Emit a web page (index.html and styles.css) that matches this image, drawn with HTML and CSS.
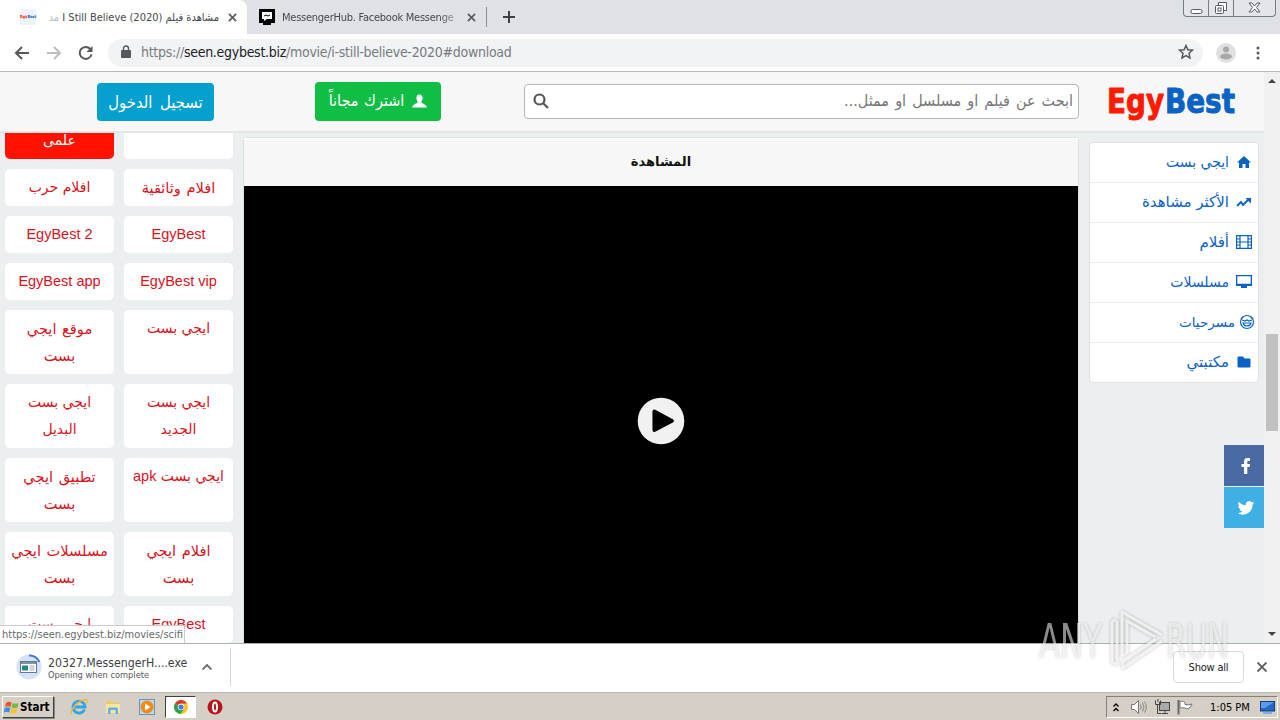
FILE: index.html
```html
<!DOCTYPE html>
<html lang="ar">

<head>
  <meta charset="UTF-8">
  <title>مشاهدة فيلم I Still Believe (2020)</title>
  <link rel="stylesheet" href="styles.css">
</head>

<body>
  <div class="tabstrip">
    <div class="tab active">
      <span class="favicon"><b>Egy</b>Best</span>
      <span class="tab-title rtl" dir="rtl">مشاهدة فيلم <bdi dir="ltr">I Still Believe (2020)</bdi> <i>مد</i></span>
      <svg class="x" viewBox="0 0 10 10"><path d="M1 1l8 8M9 1l-8 8" /></svg>
    </div>
    <div class="tab">
      <svg class="hub" viewBox="0 0 16 16"><path d="M0 0h16v14h-4v2H4v-2H0z" fill="#000" /><path d="M3 3h10v7H8l-3 2v-2H3z" fill="#fff" /><path d="M5 7l2-1 2 1 2-1" fill="none" stroke="#000" /></svg>
      <span class="tab-title fade">MessengerHub. Facebook Messenge</span>
      <svg class="x" viewBox="0 0 10 10"><path d="M1 1l8 8M9 1l-8 8" /></svg>
    </div>
    <span class="tab-sep"></span>
    <svg class="plus" viewBox="0 0 12 12"><path d="M6 0v12M0 6h12" /></svg>
    <div class="win-buttons">
      <span><svg width="13" height="14" viewBox="0 0 13 14"><rect x="1" y="8.500" width="11" height="4" rx="1.500" /></svg></span>
      <span><svg width="14" height="14" viewBox="0 0 14 14"><path d="M4.500 4V1.500h8v8H10" /><rect x="1.500" y="4.500" width="8" height="8" rx="1" /><rect x="4" y="7" width="3" height="3" /></svg></span>
      <span class="wide"><svg width="13" height="13" viewBox="0 0 13 13"><path d="M1 2h3l2.500 3L9 2h3L8.500 6.500 12 11H9L6.500 8 4 11H1l3.500-4.500z" /></svg></span>
    </div>
  </div>

  <div class="toolbar">
    <svg class="nav-icon" viewBox="0 0 16 16"><path d="M15 8H2M8 2L2 8l6 6" /></svg>
    <svg class="nav-icon off" viewBox="0 0 16 16"><path d="M1 8h13M8 2l6 6-6 6" /></svg>
    <svg class="nav-icon" viewBox="0 0 16 16"><path d="M13.500 9.500A6 6 0 1 1 12.300 4" /><path d="M14.500 1v6h-6z" fill="#55585c" stroke="none" /></svg>
    <div class="omnibox">
      <svg width="10" height="13" viewBox="0 0 10 13"><rect y="5" width="10" height="8" rx="1" fill="#55585c" /><path d="M2.500 5V3.500a2.500 2.500 0 0 1 5 0V5" fill="none" stroke="#55585c" stroke-width="1.400" /></svg>
      <span class="url">https://<b>seen.egybest.biz</b>/movie/i-still-believe-2020#download</span>
      <svg class="star" width="16" height="16" viewBox="0 0 16 16"><path d="M8 1.500l1.900 4.300 4.600.4-3.500 3.100 1 4.600L8 11.500l-4 2.400 1-4.600L1.500 6.200l4.600-.4z" /></svg>
    </div>
    <svg class="avatar" width="20" height="20" viewBox="0 0 20 20"><circle cx="10" cy="10" r="10" fill="#e0e0e0" /><circle cx="10" cy="6.500" r="3" fill="#a8a8a8" /><ellipse cx="10" cy="13.500" rx="6" ry="3" fill="#a8a8a8" /></svg>
    <svg class="dots" width="4" height="14" viewBox="0 0 4 14"><circle cx="2" cy="2" r="1.500" /><circle cx="2" cy="7" r="1.500" /><circle cx="2" cy="12" r="1.500" /></svg>
  </div>

  <div class="viewport">
    <div class="site">
      <header>
        <a class="btn login" dir="rtl">تسجيل الدخول</a>
        <a class="btn signup" dir="rtl">
          <svg width="15" height="14" viewBox="0 0 16 14"><path d="M8 0c2.400 0 3.500 1.700 3.300 4-.2 2-1 3-1.300 4 0 2 5.500 2 6 6H0c.5-4 6-4 6-6-.3-1-1.100-2-1.300-4C4.500 1.700 5.600 0 8 0z" fill="#fff" /></svg>
          <span>اشترك مجاناً</span>
        </a>
        <div class="search">
          <svg width="16" height="16" viewBox="0 0 16 16"><circle cx="6.500" cy="6.500" r="5" /><path d="M10 10l5 5" /></svg>
          <span dir="rtl">ابحث عن فيلم او مسلسل او ممثل...</span>
        </div>
        <svg class="logo" width="134" height="44" viewBox="0 0 134 44"><text x="0" y="31" textLength="57" lengthAdjust="spacingAndGlyphs" fill="#ff1a00" stroke="#ff1a00">Egy</text><text x="58" y="31" textLength="70" lengthAdjust="spacingAndGlyphs" fill="#0a62c4" stroke="#0a62c4">Best</text></svg>
      </header>

      <div class="columns">
        <div class="tags">
          <a class="hot" dir="rtl">خيال<br>علمى</a><a></a>
          <a dir="rtl">افلام حرب</a><a class="loose" dir="rtl">افلام وثائقية</a>
          <a class="en">EgyBest 2</a><a class="en">EgyBest</a>
          <a class="en">EgyBest app</a><a class="en">EgyBest vip</a>
          <a class="loose" dir="rtl">موقع ايجي<br>بست</a><a dir="rtl">ايجي بست</a>
          <a dir="rtl">ايجي بست<br>البديل</a><a dir="rtl">ايجي بست<br>الجديد</a>
          <a class="loose" dir="rtl">تطبيق ايجي<br>بست</a><a dir="rtl">ايجي بست <span class="en">apk</span></a>
          <a class="loose" dir="rtl">مسلسلات ايجي<br>بست</a><a class="loose" dir="rtl">افلام ايجي<br>بست</a>
          <a dir="rtl">ايجي بست</a><a class="en">EgyBest</a>
        </div>

        <main>
          <h2 dir="rtl">المشاهدة</h2>
          <div class="player">
            <svg width="48" height="48" viewBox="0 0 48 48"><circle cx="24" cy="24" r="23.300" fill="#f1f1f1" /><path d="M17 14v20l19-10z" stroke="#000" stroke-width="4" stroke-linejoin="round" transform="translate(1.500 1.500) scale(.93)" /></svg>
          </div>
        </main>

        <nav dir="rtl">
          <a><svg viewBox="0 0 16 16"><path d="M8 2l7 6.500h-2V14H9.500v-4h-3v4H3V8.500H1z" /></svg><span>ايجي بست</span></a>
          <a class="loose"><svg viewBox="0 0 16 16"><path class="line" d="M1 12l4-4 2 3 6-6" /><path d="M9.500 4H15v5.500z" /></svg><span>الأكثر مشاهدة</span></a>
          <a class="loose"><svg viewBox="0 0 16 16"><path class="thin" d="M.6 1.600h14.800v12.800H.6zM4 1.600v12.800M12 1.600v12.800M4 8h8M.6 5H4M.6 8H4M.6 11H4M12 5h3.400M12 8h3.400M12 11h3.400" /></svg><span>أفلام</span></a>
          <a><svg viewBox="0 0 16 16"><path d="M0 1h16v11h-5v2H5v-2H0zm1.300 1.300v7.400h13.400V2.300z" fill-rule="evenodd" /></svg><span>مسلسلات</span></a>
          <a class="face"><svg viewBox="0 0 16 16"><circle class="thin" cx="8" cy="8" r="6.500" /><path class="thin" d="M3 6l3 1 2-1 2 1 3-1M4 9c1 4 7 4 8 0zM2 5l2-2M12 3l2 2" /></svg><span>مسرحيات</span></a>
          <a class="loose"><svg viewBox="0 0 16 16"><path d="M2.500 2.500H7l1.500 2h5q1 0 1 1v7q0 1-1 1h-11q-1 0-1-1v-9q0-1 1-1z" /></svg><span>مكتبتي</span></a>
        </nav>
      </div>

      <div class="social">
        <a class="fb"><svg width="20" height="20" viewBox="0 0 20 20"><path d="M8 18v-7H5.500V8H8V5.500C8 3 9.500 2 11.500 2H14v3h-1.500c-1 0-1.200.5-1.200 1.200V8H14l-.4 3h-2.300v7z" /></svg></a>
        <a class="tw"><svg width="18" height="18" viewBox="0 0 24 24"><path d="M23 5a9 9 0 0 1-2.600.7 4.500 4.500 0 0 0 2-2.500 9 9 0 0 1-2.900 1.100 4.500 4.500 0 0 0-7.700 4.100A12.800 12.800 0 0 1 2.500 3.700a4.500 4.500 0 0 0 1.400 6 4.500 4.500 0 0 1-2-.6 4.500 4.500 0 0 0 3.600 4.500 4.500 4.500 0 0 1-2 .1 4.500 4.500 0 0 0 4.200 3.100A9 9 0 0 1 1 18.700 12.800 12.800 0 0 0 20.700 7.300 9 9 0 0 0 23 5z" /></svg></a>
      </div>
      <div class="status">https://seen.egybest.biz/movies/scifi</div>
    </div>

    <div class="scrollbar">
      <svg width="8" height="4" viewBox="0 0 8 4"><path d="M0 4l4-4 4 4z" /></svg>
      <span class="thumb"></span>
      <svg width="8" height="4" viewBox="0 0 8 4"><path d="M0 0h8L4 4z" /></svg>
    </div>
  </div>

  <div class="downloads">
    <svg class="file" width="26" height="26" viewBox="0 0 26 26"><circle cx="13" cy="13" r="12.500" fill="#d3e2f8" /><path d="M13 1.500A11.500 11.500 0 0 1 23.500 8" fill="none" stroke="#3d7bd9" stroke-width="2" /><rect x="4.500" y="7.500" width="16" height="11" fill="#fff" stroke="#63798b" /><path d="M5 8h15v2H5z" fill="#7d95a8" /><path d="M6 11.500h6v5H6z" fill="#27867d" /><path d="M13.500 12h5M13.500 14h5M13.500 16h5" stroke="#9ab" /></svg>
    <div class="file-text"><p>20327.MessengerH....exe</p><small>Opening when complete</small></div>
    <svg class="chev" width="10" height="6" viewBox="0 0 10 6"><path d="M.5 5.500L5 1l4.500 4.500" /></svg>
    <span class="dl-sep"></span>
    <button>Show all</button>
    <svg class="x" viewBox="0 0 10 10"><path d="M.5.5l9 9M9.500.5l-9 9" /></svg>
  </div>

  <div class="taskbar">
    <div class="start">
      <svg width="16" height="15" viewBox="0 0 16 15"><path d="M2 3q3-2 5.500-.5L6.500 7Q4 5.500 1 7z" fill="#e8552b" /><path d="M8.500 3q3 1.500 6 0l-1 4.500q-3 1.500-6 0z" fill="#7ab83c" /><path d="M.8 8q3-1.500 5.500 0l-1 4.500Q3 11-.2 12.500z" fill="#3c8ddb" /><path d="M7.300 8.500q3 1.500 6 0l-1 4.500q-3 1.500-6 0z" fill="#f8c426" /></svg>
      <b>Start</b>
    </div>
    <svg class="app" viewBox="0 0 18 18"><path d="M14.500 11.500A6 6 0 1 1 15 9H5" fill="none" stroke="#35a4e4" stroke-width="2.800" /><path d="M1.500 16C0 13 6 3 16 1.500c2 0 1.500 2.500 0 4" fill="none" stroke="#e9b93a" stroke-width="1.400" /></svg>
    <svg class="app" viewBox="0 0 18 18"><path d="M2 3h5l1 1.500h7V15H2z" fill="#e9cb6a" /><path d="M2 6h14v9H2z" fill="#f8e6a0" /><path d="M4 16v-5q0-1.500 1.500-1.500h7Q14 9.500 14 11v5h-2.500v-4h-5v4z" fill="#62afe0" /></svg>
    <svg class="app" viewBox="0 0 18 18"><rect x="1.500" y="1.500" width="15" height="15" fill="#b9daf2" stroke="#6395c1" /><circle cx="9" cy="9" r="6.500" fill="#f28a17" /><path d="M7 5.500v7l5.500-3.500z" fill="#fff" /></svg>
    <div class="running">
      <svg width="14" height="14" viewBox="0 0 14 14"><circle cx="7" cy="7" r="7" fill="#f6c51d" /><path d="M7 7L1 3.500A7 7 0 0 1 13 3.500H7z" fill="#e0392b" /><path d="M7 7L1 3.500A7 7 0 0 0 6.500 14L10 9z" fill="#2e9e4f" /><circle cx="7" cy="7" r="3.300" fill="#fff" /><circle cx="7" cy="7" r="2.600" fill="#3f7fe5" /></svg>
    </div>
    <svg class="app opera" viewBox="0 0 18 18"><circle cx="9" cy="9" r="7.500" fill="#b8141a" /><ellipse cx="9" cy="9" rx="2" ry="4.500" fill="#b8141a" stroke="#fff" stroke-width="2" /></svg>
    <div class="tray">
      <svg width="6" height="9" viewBox="0 0 6 9"><path d="M.5 3.500L3 1l2.500 2.500M.5 8L3 5.500 5.500 8" fill="none" stroke="#000" stroke-width="1.300" /></svg>
      <svg class="t1" width="17" height="16" viewBox="0 0 17 16"><path d="M1.500 5.500h3l4-4v13l-4-4h-3z" fill="#fff" stroke="#777" /><path d="M10.500 5.500q1.500 2.500 0 5M12.500 3.500q3 4.500 0 9M14.500 2.500q3.500 5.500 0 11" fill="none" stroke="#888" /></svg>
      <svg class="t2" width="16" height="16" viewBox="0 0 16 16"><rect x="5.500" y="3.500" width="10" height="8" fill="#aaa" stroke="#444" /><path d="M8 14.500h6M11 12v2M1.500 1.500v4h5v-4M3.500 5.500v9h4M4 0v3" fill="none" stroke="#444" /></svg>
      <svg class="t3" width="17" height="16" viewBox="0 0 17 16"><path d="M1.500 1v14.500" stroke="#666" stroke-width="2" /><path d="M3 2.500q3-1 5 1v2q3 1 7-.5-1 4-5 5-2-2-7-1z" fill="#fff" stroke="#777" /></svg>
      <span>1:05 PM</span>
      <svg class="t4" width="15" height="13" viewBox="0 0 15 13"><rect x=".5" y=".5" width="14" height="9.500" fill="#2469c9" stroke="#173d74" /><path d="M1 1h13L5 7H1z" fill="#5b9be8" /><path d="M3 12h9" stroke="#7bb0e8" stroke-width="2" /></svg>
    </div>
  </div>

  <svg class="watermark" width="200" height="66" viewBox="0 0 200 66">
    <text x="3" y="50" textLength="63" lengthAdjust="spacingAndGlyphs">ANY</text>
    <path d="M80 11l-4 3v40l5 2V13M86 48V4l40 23M91 12v34M91 13l28 16M126 33L87 60v-7l33-22" />
    <text x="130" y="50" textLength="63" lengthAdjust="spacingAndGlyphs">RUN</text>
  </svg>
</body>

</html>
```
FILE: styles.css
```css
* {
  box-sizing: border-box;
}

body {
  margin: 0;
  width: 1280px;
  height: 720px;
  overflow: hidden;
  position: relative;
  font-family: 'DejaVu Sans Condensed', 'DejaVu Sans', sans-serif;
  font-stretch: condensed;
}

svg {
  display: block;
  flex: none;
}

/* Browser tabs */
.tabstrip {
  display: flex;
  align-items: center;
  height: 34px;
  background: #dee1e6;
}

.tab {
  display: flex;
  align-items: center;
  width: 239px;
  height: 34px;
  padding: 0 10px 0 12px;
  font-size: 11px;
  color: #45484c;
  white-space: nowrap;
}

.tab.active {
  width: 247px;
  padding: 0 10px 0 20px;
  background: #fff;
  border-radius: 0 8px 0 0;
}

.favicon {
  width: 16px;
  height: 16px;
  padding-top: 6px;
  background: #edf3f8;
  color: #0a62c4;
  font-size: 4px;
  line-height: 4px;
  font-weight: bold;
}

.favicon b {
  color: #ff1a00;
}

.tab-title {
  flex: none;
  width: 175px;
  margin-left: 7px;
  letter-spacing: -0.25px;
}

.tab-title.rtl {
  width: 173px;
  margin-left: 10px;
  letter-spacing: 0;
}

.tab-title i {
  font-style: normal;
  color: #bbb;
}

.fade {
  -webkit-mask-image: linear-gradient(to right, #000 90%, rgba(0, 0, 0, 0.3));
  mask-image: linear-gradient(to right, #000 90%, rgba(0, 0, 0, 0.3));
}

.hub {
  width: 16px;
  height: 16px;
}

.x {
  width: 9px;
  height: 9px;
  margin-left: auto;
  fill: none;
  stroke: #55585c;
  stroke-width: 1.8;
}

.tab-sep {
  width: 1px;
  height: 20px;
  background: #8b8e93;
}

.plus {
  width: 12px;
  height: 12px;
  margin-left: 16px;
  stroke: #3c4043;
  stroke-width: 2;
}

.win-buttons {
  display: flex;
  align-self: flex-start;
  height: 17px;
  margin: 0 4px 0 auto;
  border: 1px solid #777b84;
  border-top: 0;
  border-radius: 0 0 4px 4px;
  background: #e3e5ea;
}

.win-buttons span {
  display: flex;
  justify-content: center;
  width: 25px;
  padding-top: 1px;
  border-right: 1px solid #777b84;
}

.win-buttons .wide {
  width: 41px;
  border: 0;
}

.win-buttons svg {
  fill: #fff;
  stroke: #555a66;
}

/* Address bar */
.toolbar {
  display: flex;
  align-items: center;
  height: 38px;
  padding-left: 14px;
  background: #fff;
  border-bottom: 1px solid #b5b8ba;
}

.nav-icon {
  width: 16px;
  height: 16px;
  margin-right: 16px;
  fill: none;
  stroke: #55585c;
  stroke-width: 2;
}

.nav-icon.off {
  stroke: #bcbec1;
}

.omnibox {
  display: flex;
  align-items: center;
  width: 1095px;
  height: 28px;
  margin-left: -2px;
  padding: 0 9px 2px 13px;
  border-radius: 14px;
  background: #f1f3f4;
}

.url {
  margin-left: 10px;
  font-size: 14px;
  color: #777b80;
  letter-spacing: -0.28px;
}

.url b {
  font-weight: normal;
  color: #202124;
}

.star {
  margin-left: auto;
  fill: none;
  stroke: #55585c;
  stroke-width: 1.5;
}

.avatar {
  margin-left: 13px;
}

.dots {
  margin-left: 20px;
  fill: #55585c;
}

/* Page */
.viewport {
  display: flex;
  height: 571px;
}

.site {
  position: relative;
  width: 1264px;
  overflow: hidden;
  background: #ebeff0;
}

header {
  display: flex;
  align-items: flex-start;
  position: relative;
  height: 61px;
  padding: 10px 0 0 97px;
  background: #f7f7f7;
  border-bottom: 2px solid #e3e7e7;
  font-family: 'DejaVu Sans', sans-serif;
}

.btn {
  display: flex;
  align-items: center;
  justify-content: center;
  height: 38px;
  border-radius: 4px;
  color: #fff;
  font-size: 16px;
  white-space: nowrap;
}

.login {
  width: 117px;
  margin-top: 1px;
  background: #05a0ce;
  word-spacing: 3px;
  font-size: 16.5px;
}

.signup {
  width: 126px;
  height: 39px;
  margin-left: 101px;
  padding-bottom: 2px;
  gap: 8px;
  background: #11be45;
  word-spacing: 1px;
}

.search {
  display: flex;
  align-items: center;
  justify-content: space-between;
  width: 555px;
  height: 35px;
  margin: 2px 0 0 83px;
  padding: 0 5px 2px 8px;
  border: 1px solid #b5b5b5;
  border-radius: 4px;
  background: #fff;
  color: #777;
  font-size: 16px;
  line-height: 30px;
  word-spacing: 1.5px;
}

.search svg {
  fill: none;
  stroke: #555;
  stroke-width: 2.2;
}

.logo {
  margin: 0 0 0 28px;
  font: bold 34px 'DejaVu Sans', sans-serif;
  stroke-width: 1px;
  stroke-linejoin: round;
}

.columns {
  display: flex;
  align-items: flex-start;
  height: 510px;
}

.tags {
  display: grid;
  grid-template-columns: 109px 109px;
  gap: 10px;
  width: 228px;
  margin: -38px 0 0 5px;
}

.tags a {
  min-height: 37px;
  padding: 5px 0;
  border-radius: 5px;
  background: #fff;
  color: #d8121c;
  font: 14px/27px 'DejaVu Sans', sans-serif;
  text-align: center;
  white-space: nowrap;
}

.tags .loose {
  font-size: 14.6px;
  word-spacing: 1px;
}

.tags .en {
  font-family: 'Liberation Sans', Arial, sans-serif;
  font-size: 14.5px;
}

.tags a.en {
  line-height: 26px;
}

.tags .hot {
  background: #ff1200;
  color: #fff;
}

main {
  width: 836px;
  margin: 4px 0 0 10px;
  border: 1px solid #dde1e2;
  border-radius: 4px 4px 0 0;
}

h2 {
  margin: 0;
  height: 48px;
  border-top: 1px solid #fff;
  background: #f7f7f7;
  color: #111;
  font: bold 13px/45px 'DejaVu Sans', sans-serif;
  text-align: center;
}

.player {
  display: flex;
  justify-content: center;
  height: 470px;
  padding-top: 211px;
  background: #000;
}

nav {
  width: 170px;
  margin: 9px 0 0 10px;
  border: 1px solid #dde1e2;
  border-radius: 4px;
  background: #fff;
}

nav a {
  display: flex;
  align-items: center;
  height: 40px;
  padding: 0 6px 1px 0;
  gap: 7px;
  border-bottom: 1px solid #e8ebec;
  color: #0a62c4;
  font: 14px 'DejaVu Sans', sans-serif;
}

nav .loose {
  font-size: 15px;
}

nav a:last-child {
  height: 39px;
  border: 0;
}

nav .face {
  padding-right: 3px;
  gap: 4px;
  font-size: 13.5px;
}

nav svg {
  width: 16px;
  height: 16px;
  fill: #0a62c4;
}

nav .line,
nav .thin {
  fill: none;
  stroke: #0a62c4;
  stroke-width: 1.8;
}

nav .thin {
  stroke-width: 1.2;
}

/* Share buttons stick to the right edge of the page */
.social {
  position: absolute;
  top: 373px;
  right: 0;
}

.social a {
  display: flex;
  align-items: center;
  justify-content: center;
  width: 40px;
  height: 41px;
  margin-bottom: 1px;
  padding-left: 4px;
  background: #4b69a3;
}

.social .tw {
  background: #3eb0e5;
}

.social svg {
  fill: #fff;
}

.status {
  position: absolute;
  left: 0;
  bottom: 0;
  width: 185px;
  height: 18px;
  padding-left: 2px;
  border: 1px solid #c9cbcd;
  border-width: 1px 1px 0 0;
  background: #fff;
  color: #66696d;
  font-size: 11px;
  line-height: 17px;
  white-space: nowrap;
}

.scrollbar {
  display: flex;
  flex-direction: column;
  align-items: center;
  width: 16px;
  padding: 7px 0;
  background: #f1f1f1;
}

.scrollbar svg {
  fill: #454545;
}

.thumb {
  width: 12px;
  height: 97px;
  margin: 251px 0 auto;
  background: #c1c1c1;
}

/* Download shelf */
.downloads {
  display: flex;
  align-items: center;
  height: 49px;
  padding: 0 13px 2px 16px;
  border-top: 1px solid #acaeb0;
  background: #fff;
}

.file-text {
  width: 140px;
  margin: 3px 0 0 6px;
  color: #3c4043;
  white-space: nowrap;
}

.file-text p {
  margin: 0;
  font-size: 12.2px;
  line-height: 13px;
}

.file-text small {
  display: block;
  color: #55585c;
  font-size: 9.2px;
  line-height: 10px;
}

.chev {
  margin-left: 14px;
  fill: none;
  stroke: #66696d;
  stroke-width: 1.8;
}

.dl-sep {
  width: 1px;
  height: 38px;
  margin: 0 auto 0 18px;
  background: #d3d5d7;
}

.downloads button {
  width: 71px;
  height: 32px;
  padding: 0;
  border: 1px solid #d6d8db;
  border-radius: 4px;
  background: #fff;
  color: #222;
  font: 11px 'DejaVu Sans Condensed', 'DejaVu Sans', sans-serif;
  letter-spacing: -0.2px;
}

.downloads .x {
  width: 10px;
  height: 10px;
  margin-left: 13px;
}

/* Windows taskbar */
.taskbar {
  display: flex;
  align-items: center;
  height: 28px;
  padding-top: 1px;
  border-top: 1px solid #bcb8b0;
  background: #d5cfc6;
}

.start {
  display: flex;
  align-items: center;
  gap: 0;
  width: 52px;
  height: 22px;
  margin: 0 16px 0 2px;
  padding-left: 1px;
  border: 1px solid;
  border-color: #fff #404040 #404040 #fff;
  box-shadow: 1px 1px #888;
  font-size: 11.5px;
}

.app {
  width: 18px;
  height: 18px;
  margin-right: 16px;
}

.running {
  display: flex;
  align-items: center;
  justify-content: center;
  width: 31px;
  height: 22px;
  margin: 0 10px 0 -7px;
  border: 1px solid;
  border-color: #404040 #fff #fff #404040;
  background: #fff;
}

.tray {
  display: flex;
  align-items: center;
  width: 172px;
  height: 22px;
  margin: 0 2px 0 auto;
  padding-left: 6px;
  border: 1px solid;
  border-color: #85817a #fff #fff #85817a;
  font-size: 11px;
  white-space: nowrap;
}

.t1 {
  margin-left: 11px;
}

.t2,
.t3 {
  margin-left: 7px;
}

.tray span {
  margin-left: 16px;
}

.t4 {
  margin: 0 2px 0 auto;
}

.watermark {
  position: absolute;
  left: 1036px;
  top: 608px;
  font: 48px 'DejaVu Sans Condensed', 'DejaVu Sans', sans-serif;
  fill: #fff;
  fill-opacity: 0.55;
  filter: drop-shadow(0 0 1.5px rgba(0, 0, 0, 0.35));
}

.watermark path {
  fill: none;
  stroke: #fff;
  stroke-opacity: 0.7;
  stroke-width: 3;
  stroke-linejoin: round;
}
```
